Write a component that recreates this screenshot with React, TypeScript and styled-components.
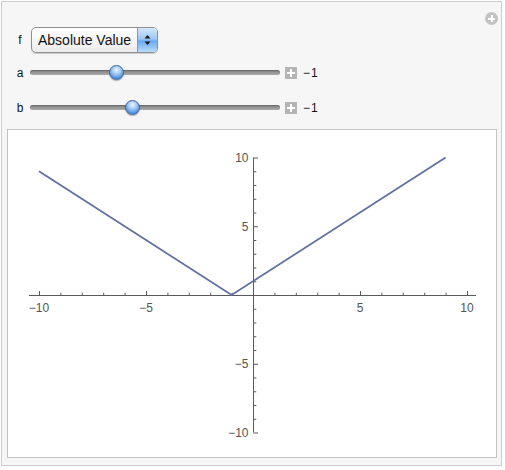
import React from "react";
import styled, { createGlobalStyle } from "styled-components";

const Global = createGlobalStyle`
  html, body { margin: 0; padding: 0; background: #ffffff; }
  body { font-family: "Liberation Sans", Arial, sans-serif; }
`;

const Panel = styled.div`
  position: relative;
  box-sizing: border-box;
  margin: 1px 0 0 1px;
  width: 501px;
  height: 465px;
  background: #f6f6f6;
  border: 1px solid #cdcdcd;
  box-shadow: 0 1px 1px rgba(0, 0, 0, 0.06);
`;

const Controls = styled.div`
  display: flex;
  flex-direction: column;
  padding: 25px 0 0 12px;
`;

const Row = styled.div<{ $h: number; $mt: number }>`
  display: flex;
  align-items: center;
  gap: 4px;
  height: ${(p) => p.$h}px;
  margin-top: ${(p) => p.$mt}px;
`;

const Label = styled.span`
  width: 12px;
  text-align: center;
  font-size: 12px;
  color: #111111;
`;

const Popup = styled.div`
  box-sizing: border-box;
  margin-left: 1px;
  width: 127px;
  height: 26px;
  display: flex;
  align-items: stretch;
  border: 1px solid #909090;
  border-radius: 5px;
  background: linear-gradient(#ffffff, #ececec);
  box-shadow: 0 1px 1px rgba(0, 0, 0, 0.18);
  overflow: hidden;
`;

const PopupText = styled.span`
  flex: 1;
  display: flex;
  align-items: center;
  padding-left: 6px;
  font-size: 14px;
  color: #111;
`;

const Stepper = styled.span`
  width: 19px;
  display: flex;
  align-items: center;
  justify-content: center;
  border-left: 1px solid #7d98bd;
  background: linear-gradient(#d4e7fb 0%, #9ec8f3 45%, #6aaaf0 55%, #b9dcfb 100%);
`;

const SliderTrack = styled.div`
  position: relative;
  width: 250px;
  height: 5px;
  border-radius: 3px;
  background: linear-gradient(#7f7f7f, #ababab);
  box-shadow: inset 0 1px 1px rgba(0, 0, 0, 0.2);
`;

const Thumb = styled.span`
  position: absolute;
  top: 50%;
  width: 15px;
  height: 15px;
  margin: -7.5px 0 0 -7.5px;
  box-sizing: border-box;
  border-radius: 50%;
  border: 1px solid #3c62a0;
  background: radial-gradient(circle at 50% 30%, #eaf4ff 0%, #a7cdf5 35%, #4f8fdc 75%, #2f6cc0 100%);
  box-shadow: 0 1px 1px rgba(0, 0, 0, 0.3);
`;

const PlusSquare = styled.span`
  position: relative;
  margin-left: 1px;
  width: 12px;
  height: 12px;
  background: #b4b4b4;
  &::before, &::after {
    content: "";
    position: absolute;
    background: #ffffff;
  }
  &::before { left: 5px; top: 2px; width: 2px; height: 8px; }
  &::after { left: 2px; top: 5px; width: 8px; height: 2px; }
`;

const Value = styled.span`
  margin-left: 2px;
  font-size: 12px;
  color: #111111;
  letter-spacing: 1px;
`;

const CornerPlus = styled.span`
  position: absolute;
  top: 10px;
  right: 3px;
  width: 13px;
  height: 13px;
  border-radius: 50%;
  background: #c2c2c2;
  &::before, &::after {
    content: "";
    position: absolute;
    background: #ffffff;
  }
  &::before { left: 5.5px; top: 3px; width: 2px; height: 7px; }
  &::after { left: 3px; top: 5.5px; width: 7px; height: 2px; }
`;

const PlotFrame = styled.div`
  box-sizing: border-box;
  margin: 11px 4px 0 5px;
  height: 329px;
  background: #ffffff;
  border: 1px solid #c4c4c4;
  display: flex;
`;

const Slider = ({ frac }: { frac: number }) => (
  <SliderTrack>
    <Thumb style={{ left: `${7.5 + frac * 235}px` }} />
  </SliderTrack>
);

const X = (u: number) => 253 + 21.4 * u;
const Y = (v: number) => 295 - 13.75 * v;

const Plot = () => {
  const xt: number[] = [];
  for (let i = -10; i <= 10; i++) if (i !== 0) xt.push(i);
  const axis = "#5a5a5a";
  const lab = "#555555";
  return (
    <svg width="488" height="327" viewBox="8 130 488 327">
      <g stroke={axis} strokeWidth="1" fill="none">
        <line x1="29" y1="295.5" x2="476" y2="295.5" />
        <line x1="253.5" y1={Y(10)} x2="253.5" y2={Y(-10)} />
        {xt.map((i) => (
          <line
            key={"x" + i}
            x1={X(i) + 0.5}
            x2={X(i) + 0.5}
            y1="295.5"
            y2={295.5 - (i % 5 === 0 ? 4.5 : 2.8)}
          />
        ))}
        {xt.map((i) => (
          <line
            key={"y" + i}
            y1={Y(i) + 0.5}
            y2={Y(i) + 0.5}
            x1="253.5"
            x2={253.5 + (i % 5 === 0 ? 4.5 : 2.8)}
          />
        ))}
      </g>
      <g fill={lab} fontFamily="Liberation Sans, Arial, sans-serif" fontSize="12">
        {[-10, -5, 5, 10].map((i) => (
          <text key={"xl" + i} x={X(i)} y="311.5" textAnchor="middle">
            {i < 0 ? "\u2212" + Math.abs(i) : i}
          </text>
        ))}
        {[-10, -5, 5, 10].map((i) => (
          <text key={"yl" + i} x="248.5" y={Y(i) + 4.5} textAnchor="end">
            {i < 0 ? "\u2212" + Math.abs(i) : i}
          </text>
        ))}
      </g>
      <polyline
        points={`${X(-10)},${Y(9)} ${X(-1)},${Y(0)} ${X(9)},${Y(10)}`}
        fill="none"
        stroke="#6270a0"
        strokeWidth="1.8"
        strokeLinejoin="miter"
      />
    </svg>
  );
};

const StepArrows = () => (
  <svg width="7" height="12" viewBox="0 0 7 12">
    <path d="M3.5 1 L6.5 4.5 L0.5 4.5 Z" fill="#1a1a1a" />
    <path d="M3.5 11 L6.5 7.5 L0.5 7.5 Z" fill="#1a1a1a" />
  </svg>
);

export default function App() {
  return (
    <>
      <Global />
      <Panel>
        <CornerPlus />
        <Controls>
          <Row $h={26} $mt={0}>
            <Label>f</Label>
            <Popup>
              <PopupText>Absolute Value</PopupText>
              <Stepper>
                <StepArrows />
              </Stepper>
            </Popup>
          </Row>
          <Row $h={21} $mt={9}>
            <Label>a</Label>
            <Slider frac={0.337} />
            <PlusSquare />
            <Value>−1</Value>
          </Row>
          <Row $h={21} $mt={14}>
            <Label>b</Label>
            <Slider frac={0.403} />
            <PlusSquare />
            <Value>−1</Value>
          </Row>
        </Controls>
        <PlotFrame>
          <Plot />
        </PlotFrame>
      </Panel>
    </>
  );
}
